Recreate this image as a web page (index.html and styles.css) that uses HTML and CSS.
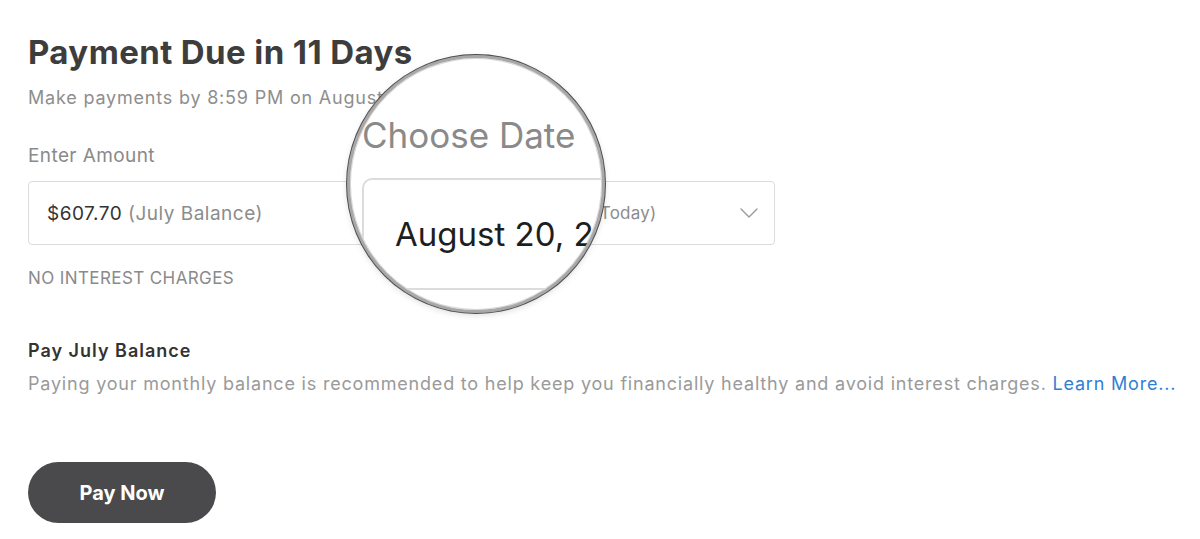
FILE: index.html
```html
<!DOCTYPE html>
<html lang="en">
<head>
<meta charset="utf-8">
<title>Payment Due</title>
<link rel="stylesheet" href="styles.css">
</head>
<body>
<main class="page">
  <h1 class="title">Payment Due in 11 Days</h1>
  <p class="subtitle">Make payments by 8:59 PM on August 31.</p>

  <div class="fields">
    <div class="field">
      <div class="label">Enter Amount</div>
      <div class="box">
        <span class="val">$607.70</span>&nbsp;<span class="muted">(July Balance)</span>
      </div>
    </div>
    <div class="field">
      <div class="label under-lens">Choose Date</div>
      <div class="box box-select">
        <span class="date-text"><span class="val under-lens">August 20, 2019</span> <span class="muted">(Today)</span></span>
        <svg class="chevron" width="18" height="10" viewBox="0 0 18 10"><polyline points="1,1 9,9 17,1" fill="none" stroke="#9a9a9a" stroke-width="1.4" stroke-linecap="round" stroke-linejoin="round"/></svg>
      </div>
    </div>
  </div>

  <div class="note">NO INTEREST CHARGES</div>

  <h2 class="section-title">Pay July Balance</h2>
  <p class="desc">Paying your monthly balance is recommended to help keep you financially healthy and avoid interest charges. <a class="link" href="#">Learn More...</a></p>

  <button class="pay-btn" type="button">Pay Now</button>
</main>

<div class="magnifier" aria-hidden="true">
  <div class="mag-label">Choose Date</div>
  <div class="mag-box"><span class="mag-date">August 20, 2019</span></div>
</div>
</body>
</html>
```

FILE: styles.css
```css
* { box-sizing: border-box; }
html, body { margin: 0; padding: 0; background: #fff; }
body {
  font-family: "Inter", "Liberation Sans", Arial, sans-serif;
  color: #8c8c8c;
  width: 1200px;
  height: 539px;
  overflow: hidden;
  position: relative;
}
.page {
  padding: 33px 28px 0 28px;
  display: flex;
  flex-direction: column;
  align-items: flex-start;
}
.title {
  margin: 0;
  font-size: 33px;
  line-height: 38px;
  font-weight: 700;
  color: #3d3d3d;
  letter-spacing: 0.4px;
}
.subtitle {
  margin: 15px 0 0 0;
  font-size: 18px;
  line-height: 24px;
  color: #8e8e8e;
  letter-spacing: 0.8px;
}
.fields {
  margin-top: 34px;
  display: grid;
  grid-template-columns: 365px 365px;
  column-gap: 17px;
}
.field { display: flex; flex-direction: column; }
.label {
  font-size: 19px;
  line-height: 24px;
  color: #8a8a8a;
  letter-spacing: 0.4px;
}
.under-lens { visibility: hidden; }
.box {
  margin-top: 13px;
  height: 64px;
  border: 1px solid #dcdcdc;
  border-radius: 4px;
  display: flex;
  align-items: center;
  padding: 0 18px;
  font-size: 19px;
  letter-spacing: 0.5px;
  white-space: nowrap;
}
.val { color: #333; }
.muted { color: #8c8c8c; }
.box-select {
  justify-content: space-between;
  padding-right: 16px;
  font-size: 17px;
  letter-spacing: 0.2px;
}
.date-text { padding-left: 26px; }
.chevron { display: block; }
.note {
  margin-top: 22px;
  font-size: 17px;
  line-height: 22px;
  color: #8a8a8a;
  letter-spacing: 0.4px;
}
.section-title {
  margin: 50px 0 0 0;
  font-size: 18px;
  line-height: 24px;
  font-weight: 600;
  color: #333;
  letter-spacing: 1px;
}
.desc {
  margin: 9px 0 0 0;
  font-size: 18px;
  line-height: 24px;
  color: #9a9a9a;
  letter-spacing: 0.8px;
  white-space: nowrap;
}
.link { color: #2f7fd4; text-decoration: none; }
.pay-btn {
  margin-top: 66px;
  width: 188px;
  height: 61px;
  border: none;
  border-radius: 31px;
  background: #4a4a4c;
  color: #fff;
  font-family: inherit;
  font-size: 20px;
  font-weight: 700;
  padding: 0;
}

/* magnifier overlay */
.magnifier {
  position: absolute;
  left: 347px;
  top: 55px;
  width: 258px;
  height: 258px;
  border-radius: 50%;
  background: #fff;
  border: 3px solid #a8a8a8;
  box-shadow: 0 0 0 1px #4d4d4d, inset 0 0 0 1px #d8d8d8, 0 2px 6px rgba(0,0,0,0.15);
  overflow: hidden;
  padding: 56px 0 0 12px;
}
.mag-label {
  font-size: 35px;
  line-height: 42px;
  color: #8a8a8a;
  white-space: nowrap;
}
.mag-box {
  margin-top: 22px;
  width: 420px;
  height: 112px;
  border: 2px solid #dcdcdc;
  border-radius: 10px;
  display: flex;
  align-items: center;
  padding-left: 31px;
}
.mag-date {
  font-size: 33px;
  color: #1e1e1e;
  white-space: nowrap;
}
```
